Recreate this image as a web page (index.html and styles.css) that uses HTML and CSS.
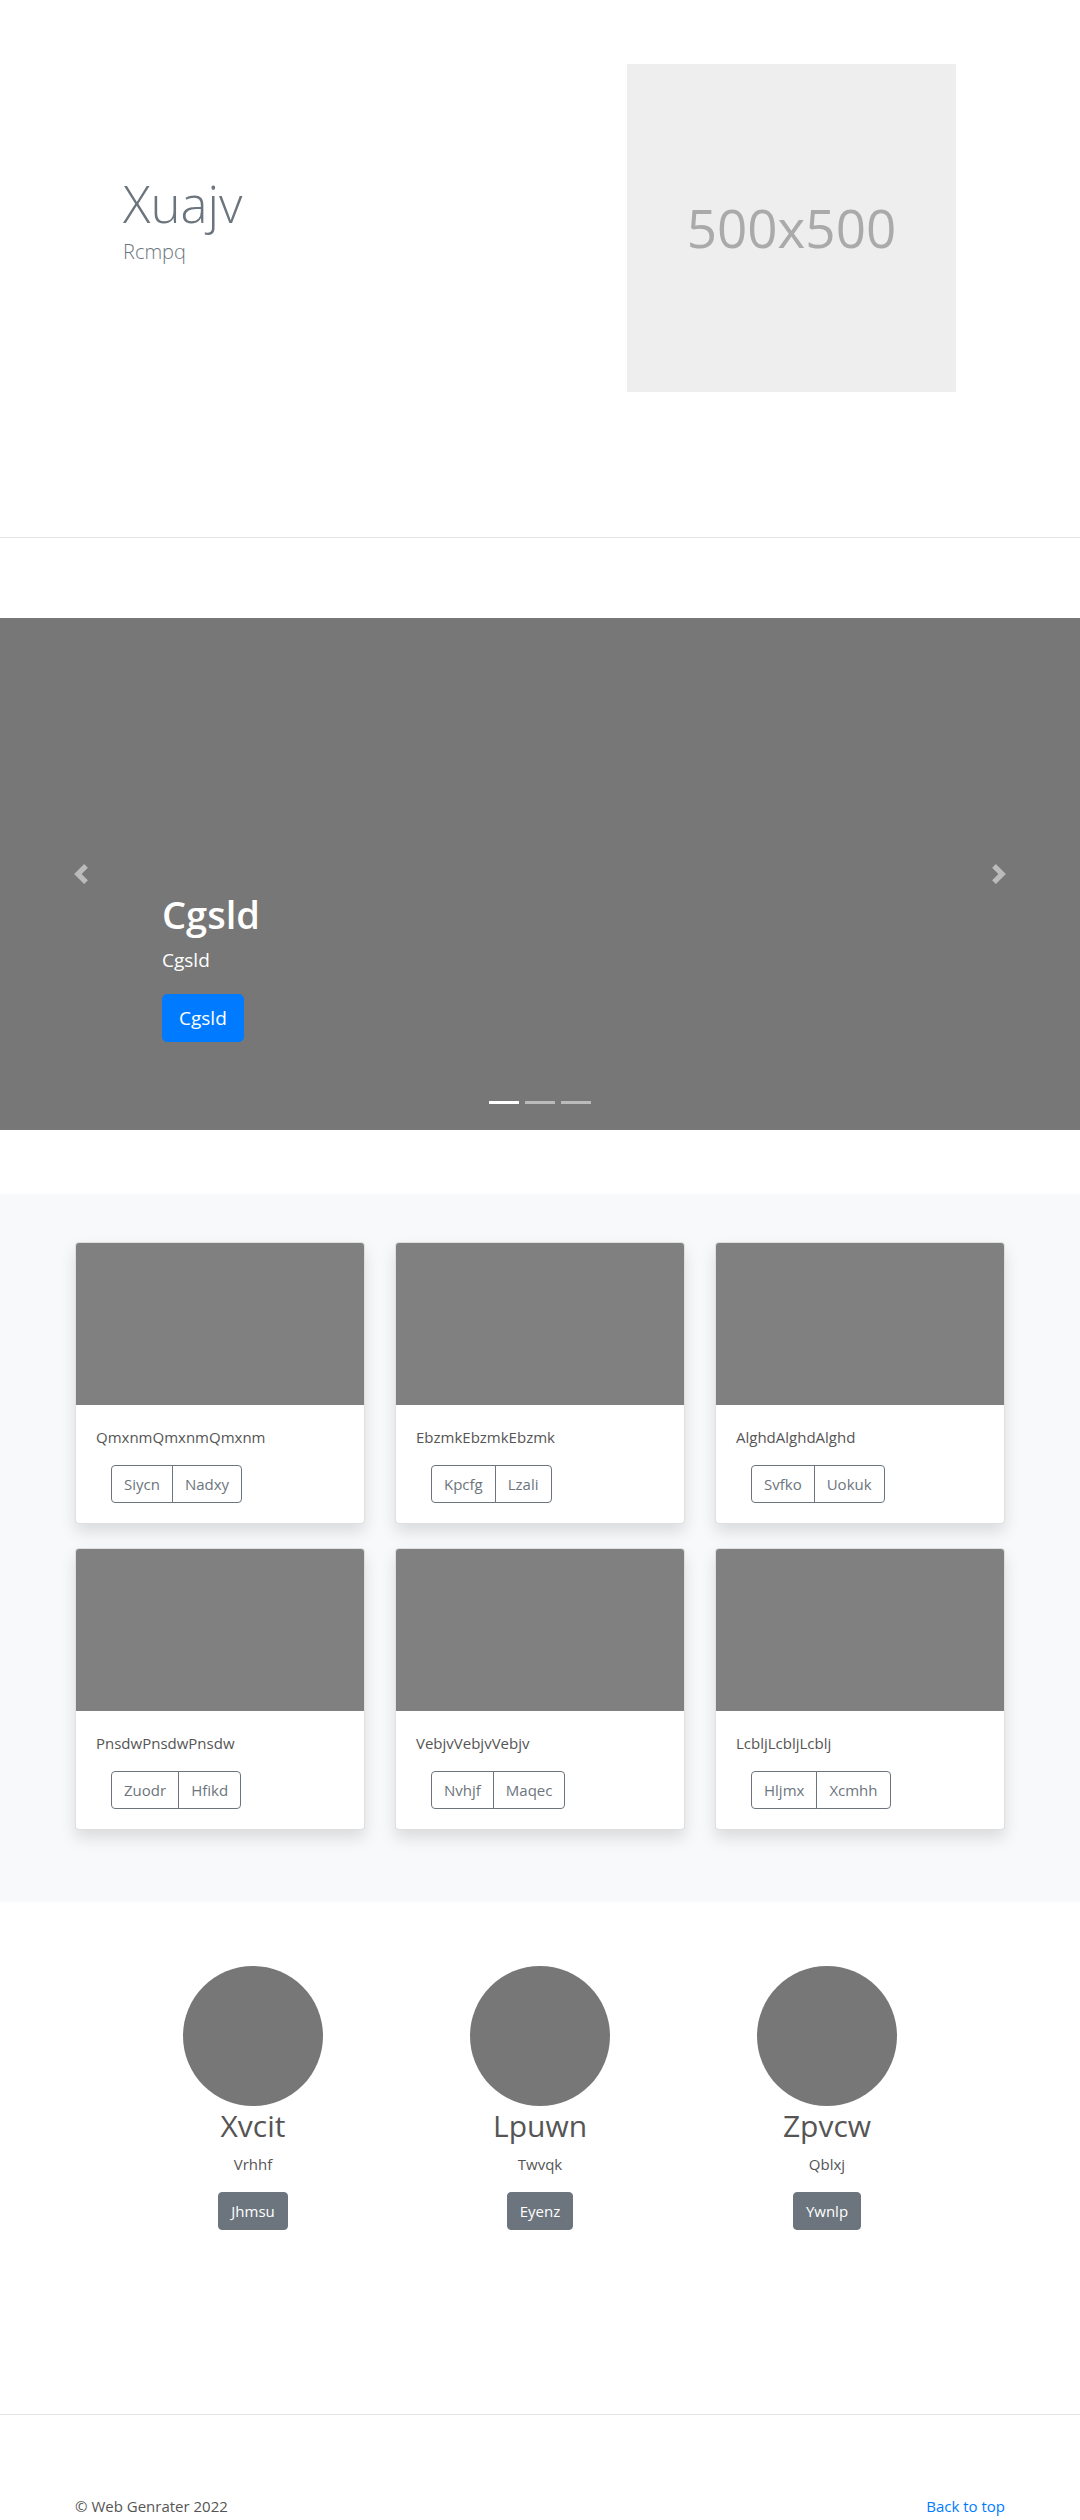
FILE: index.html
```html
<!DOCTYPE html>
<html lang="en">
<head>
  <meta charset="UTF-8">
  <meta name="viewport" content="width=device-width, initial-scale=1.0">
  <title>Web Genrater</title>
  <link rel="stylesheet" href="styles.css">
</head>
<body>

  <section class="hero">
    <div class="container hero-row">
      <div class="hero-text">
        <h1>Xuajv</h1>
        <p>Rcmpq</p>
      </div>
      <div class="hero-media">
        <div class="placeholder">500x500</div>
      </div>
    </div>
  </section>

  <section class="carousel">
    <a class="control control-prev" href="#">
      <svg width="20" height="20" viewBox="0 0 8 8" fill="#fff"><path d="M5.25 0l-4 4 4 4 1.5-1.5L4.25 4l2.5-2.5L5.25 0z"/></svg>
    </a>
    <div class="caption">
      <h2>Cgsld</h2>
      <p>Cgsld</p>
      <p><a class="btn btn-primary btn-lg" href="#">Cgsld</a></p>
    </div>
    <a class="control control-next" href="#">
      <svg width="20" height="20" viewBox="0 0 8 8" fill="#fff"><path d="M2.75 0l-1.5 1.5L3.75 4l-2.5 2.5L2.75 8l4-4-4-4z"/></svg>
    </a>
    <ol class="indicators">
      <li class="active"></li>
      <li></li>
      <li></li>
    </ol>
  </section>

  <section class="album">
    <div class="container card-grid">
      <div class="card">
        <div class="card-img"></div>
        <div class="card-body">
          <p>QmxnmQmxnmQmxnm</p>
          <div class="btn-group">
            <button class="btn btn-outline">Siycn</button>
            <button class="btn btn-outline">Nadxy</button>
          </div>
        </div>
      </div>
      <div class="card">
        <div class="card-img"></div>
        <div class="card-body">
          <p>EbzmkEbzmkEbzmk</p>
          <div class="btn-group">
            <button class="btn btn-outline">Kpcfg</button>
            <button class="btn btn-outline">Lzali</button>
          </div>
        </div>
      </div>
      <div class="card">
        <div class="card-img"></div>
        <div class="card-body">
          <p>AlghdAlghdAlghd</p>
          <div class="btn-group">
            <button class="btn btn-outline">Svfko</button>
            <button class="btn btn-outline">Uokuk</button>
          </div>
        </div>
      </div>
      <div class="card">
        <div class="card-img"></div>
        <div class="card-body">
          <p>PnsdwPnsdwPnsdw</p>
          <div class="btn-group">
            <button class="btn btn-outline">Zuodr</button>
            <button class="btn btn-outline">Hfikd</button>
          </div>
        </div>
      </div>
      <div class="card">
        <div class="card-img"></div>
        <div class="card-body">
          <p>VebjvVebjvVebjv</p>
          <div class="btn-group">
            <button class="btn btn-outline">Nvhjf</button>
            <button class="btn btn-outline">Maqec</button>
          </div>
        </div>
      </div>
      <div class="card">
        <div class="card-img"></div>
        <div class="card-body">
          <p>LcbljLcbljLcblj</p>
          <div class="btn-group">
            <button class="btn btn-outline">Hljmx</button>
            <button class="btn btn-outline">Xcmhh</button>
          </div>
        </div>
      </div>
    </div>
  </section>

  <section class="team">
    <div class="team-grid">
      <div class="member">
        <div class="avatar"></div>
        <h2>Xvcit</h2>
        <p>Vrhhf</p>
        <a class="btn btn-secondary" href="#">Jhmsu</a>
      </div>
      <div class="member">
        <div class="avatar"></div>
        <h2>Lpuwn</h2>
        <p>Twvqk</p>
        <a class="btn btn-secondary" href="#">Eyenz</a>
      </div>
      <div class="member">
        <div class="avatar"></div>
        <h2>Zpvcw</h2>
        <p>Qblxj</p>
        <a class="btn btn-secondary" href="#">Ywnlp</a>
      </div>
    </div>
  </section>

  <footer>
    <div class="container footer-row">
      <p>&copy; Web Genrater 2022</p>
      <a href="#">Back to top</a>
    </div>
  </footer>

</body>
</html>
```

FILE: styles.css
```css
body {
  font-family: 'Open Sans', 'Noto Sans', sans-serif;
  font-size: 15px;
  line-height: 24px;
  color: #555;
  margin: 0;
  padding: 0;
  background-color: #fff;
}

a {
  text-decoration: none;
}

.container {
  width: 930px;
  margin: 0 auto;
}

/* hero */

.hero {
  height: 538px;
  box-sizing: border-box;
  border-bottom: 1px solid #e5e5e5;
}

.hero-row {
  display: flex;
  align-items: flex-start;
}

.hero-text {
  width: 465px;
  padding: 173px 0 0 48px;
  box-sizing: border-box;
  color: #6c757d;
}

.hero-text h1 {
  font-size: 51px;
  font-weight: 300;
  line-height: 60px;
  margin: 0 0 4px;
}

.hero-text p {
  font-size: 20px;
  font-weight: 300;
  line-height: 30px;
  margin: 0;
}

.hero-media {
  width: 465px;
  display: flex;
  justify-content: flex-end;
  padding: 64px 49px 0 0;
  box-sizing: border-box;
}

.placeholder {
  width: 329px;
  height: 328px;
  background-color: #eee;
  color: #aaa;
  font-size: 53px;
  display: flex;
  justify-content: center;
  align-items: center;
}

/* carousel */

.carousel {
  position: relative;
  height: 512px;
  margin: 80px 0 64px;
  background-color: #777;
}

.control {
  position: absolute;
  top: 0;
  bottom: 0;
  width: 15%;
  display: flex;
  justify-content: center;
  align-items: center;
  opacity: 0.5;
}

.control-prev {
  left: 0;
}

.control-next {
  right: 0;
}

.caption {
  position: absolute;
  left: 15%;
  right: 15%;
  bottom: 48px;
  padding: 20px 0;
  color: #fff;
}

.caption h2 {
  font-size: 38px;
  font-weight: 600;
  line-height: 48px;
  margin: 0 0 8px;
}

.caption p {
  font-size: 19px;
  line-height: 28px;
  margin: 0 0 20px;
}

.indicators {
  position: absolute;
  left: 0;
  right: 0;
  bottom: 26px;
  display: flex;
  justify-content: center;
  list-style-type: none;
  margin: 0;
  padding: 0;
}

.indicators li {
  width: 30px;
  height: 3px;
  margin: 0 3px;
  background-color: #fff;
  opacity: 0.5;
}

.indicators li.active {
  opacity: 1;
}

/* buttons */

.btn {
  display: inline-block;
  font-family: inherit;
  font-size: 15px;
  line-height: 24px;
  padding: 6px 12px;
  border: 1px solid transparent;
  border-radius: 4px;
  background: none;
  cursor: pointer;
}

.btn-primary {
  background-color: #007bff;
  border-color: #007bff;
  color: #fff;
}

.btn-lg {
  font-size: 19px;
  line-height: 30px;
  padding: 8px 16px;
  border-radius: 5px;
}

.btn-secondary {
  background-color: #6c757d;
  border-color: #6c757d;
  color: #fff;
}

.btn-outline {
  color: #6c757d;
  border-color: #6c757d;
}

.btn-group {
  display: inline-flex;
  margin-left: 15px;
}

.btn-group .btn:first-child {
  border-radius: 4px 0 0 4px;
}

.btn-group .btn:last-child {
  border-radius: 0 4px 4px 0;
  margin-left: -1px;
}

/* album */

.album {
  background-color: #f8f9fa;
  padding: 48px 0;
}

.card-grid {
  display: grid;
  grid-template-columns: repeat(3, 290px);
  column-gap: 30px;
}

.card {
  margin-bottom: 24px;
  background-color: #fff;
  border: 1px solid rgba(0, 0, 0, 0.125);
  border-radius: 4px;
  overflow: hidden;
  box-shadow: 0 8px 16px rgba(0, 0, 0, 0.12);
}

.card-img {
  height: 162px;
  background-color: #808080;
}

.card-body {
  padding: 20px;
}

.card-body p {
  margin: 0 0 16px;
}

/* team */

.team {
  padding: 64px 0 184px;
}

.team-grid {
  width: 861px;
  margin: 0 auto;
  display: grid;
  grid-template-columns: repeat(3, 1fr);
  text-align: center;
}

.avatar {
  width: 140px;
  height: 140px;
  margin: 0 auto 2px;
  border-radius: 50%;
  background-color: #777;
}

.member h2 {
  font-size: 30px;
  font-weight: 400;
  line-height: 36px;
  margin: 0 0 8px;
}

.member p {
  margin: 0 0 16px;
}

/* footer */

footer {
  border-top: 1px solid #e5e5e5;
  padding-top: 79px;
}

.footer-row {
  display: flex;
  justify-content: space-between;
}

.footer-row p {
  margin: 0;
}

.footer-row a {
  color: #007bff;
}
```
